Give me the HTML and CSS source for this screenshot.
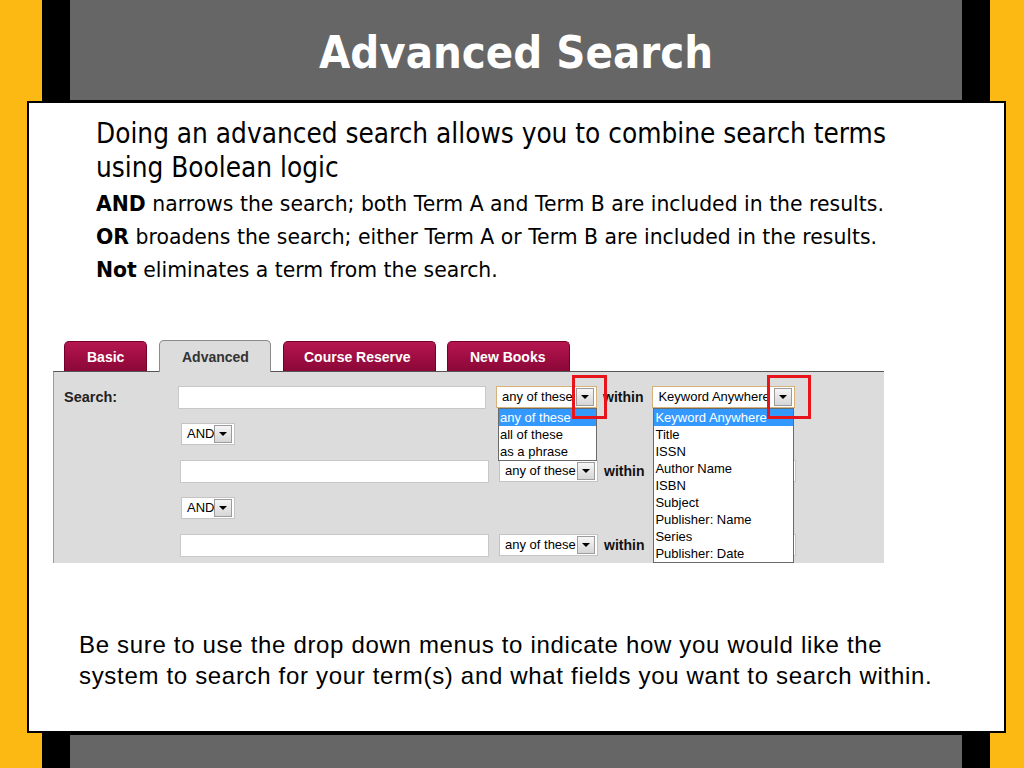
FILE: index.html
```html
<!DOCTYPE html>
<html lang="en">

<head>
    <meta charset="utf-8">
    <meta name="viewport" content="width=device-width, initial-scale=1.0">
    <title>Advanced Search</title>
    <link rel="stylesheet" href="styles.css">
</head>

<body>
    <div class="slide">
        <header class="title-bar">
            <h1>Advanced Search</h1>
        </header>

        <section class="card">
            <div class="intro">
                <p class="lead">Doing an advanced search allows you to combine search terms using Boolean logic</p>
                <p class="op"><b>AND</b> narrows the search; both Term A and Term B are included in the results.</p>
                <p class="op"><b>OR</b> broadens the search; either Term A or Term B are included in the results.</p>
                <p class="op"><b>Not</b> eliminates a term from the search.</p>
            </div>

            <!-- screenshot of the catalogue search form -->
            <div class="shot">
                <div class="tabs">
                    <span class="tab">Basic</span>
                    <span class="tab active">Advanced</span>
                    <span class="tab wide">Course Reserve</span>
                    <span class="tab books">New Books</span>
                </div>
                <div class="panel">
                    <div class="row">
                        <span class="label">Search:</span>
                        <span class="input first"></span>
                        <span class="select mode focus">any of these<i class="arrow"></i>
                            <ul class="list">
                                <li class="hl">any of these</li>
                                <li>all of these</li>
                                <li>as a phrase</li>
                            </ul>
                            <span class="mark"></span>
                        </span>
                        <span class="within">within</span>
                        <span class="select field focus">Keyword Anywhere<i class="arrow"></i>
                            <ul class="list">
                                <li class="hl">Keyword Anywhere</li>
                                <li>Title</li>
                                <li>ISSN</li>
                                <li>Author Name</li>
                                <li>ISBN</li>
                                <li>Subject</li>
                                <li>Publisher: Name</li>
                                <li>Series</li>
                                <li>Publisher: Date</li>
                            </ul>
                            <span class="mark"></span>
                        </span>
                    </div>
                    <div class="row">
                        <span class="label"></span>
                        <span class="select bool">AND<i class="arrow"></i></span>
                    </div>
                    <div class="row">
                        <span class="label"></span>
                        <span class="input"></span>
                        <span class="select mode">any of these<i class="arrow"></i></span>
                        <span class="within">within</span>
                        <span class="select field"></span>
                    </div>
                    <div class="row">
                        <span class="label"></span>
                        <span class="select bool">AND<i class="arrow"></i></span>
                    </div>
                    <div class="row">
                        <span class="label"></span>
                        <span class="input"></span>
                        <span class="select mode">any of these<i class="arrow"></i></span>
                        <span class="within">within</span>
                        <span class="select field"></span>
                    </div>
                </div>
            </div>

            <p class="note">Be sure to use the drop down menus to indicate how you would like the system to search for your term(s) and what fields you want to search within.</p>
        </section>

        <footer class="foot-bar"></footer>
    </div>
</body>

</html>
```

FILE: styles.css
```css
* {
    padding: 0;
    margin: 0;
    box-sizing: border-box;
}

body {
    background-color: #fdb913;
    height: 768px;
    overflow: hidden;
}

.slide {
    margin-left: 42px;
    width: 948px;
    height: 768px;
    background-color: #000;
    display: flex;
    flex-direction: column;
}

.title-bar {
    margin: 0 28px;
    height: 100px;
    background-color: #666;
    display: flex;
    align-items: center;
    justify-content: center;
}

.title-bar h1 {
    color: #fff;
    font-family: "DejaVu Sans Condensed", "DejaVu Sans", sans-serif;
    font-weight: bold;
    font-size: 45px;
    padding-top: 4px;
}

.card {
    margin: 1px -16px 0 -15px;
    height: 632px;
    background-color: #fff;
    border: 2px solid #000;
    padding: 14px 0 0 0;
}

.intro {
    padding-left: 67px;
    color: #000;
}

.lead {
    font-family: "DejaVu Sans Condensed", "DejaVu Sans", sans-serif;
    font-size: 27.7px;
    line-height: 34px;
    width: 840px;
}

.op {
    font-family: "DejaVu Sans", sans-serif;
    font-size: 20.4px;
    line-height: 33px;
}

.lead + .op {
    margin-top: 3px;
}

.note {
    margin-top: 66px;
    padding-left: 50px;
    font-family: "Liberation Sans", Arial, sans-serif;
    font-size: 24px;
    letter-spacing: 0.68px;
    line-height: 31px;
    width: 920px;
    color: #000;
}

/* form screenshot */

.shot {
    margin: 53px 0 0 24px;
    width: 831px;
    font-family: "Liberation Sans", Arial, sans-serif;
    font-size: 13px;
}

.tabs {
    display: flex;
    align-items: flex-end;
    gap: 12px;
    padding-left: 11px;
    height: 31px;
}

.tab {
    width: 83px;
    height: 30px;
    padding: 7px 0 0 22px;
    color: #fff;
    font-size: 14px;
    font-weight: bold;
    border: 1px solid #74002a;
    border-bottom: none;
    border-radius: 5px 5px 0 0;
    background: linear-gradient(#b5164f, #9c0c40 60%, #8a0837);
}

.tab.active {
    width: 112px;
    height: 32px;
    margin-bottom: -1px;
    padding-top: 8px;
    color: #333;
    background: #dcdcdc;
    border-color: #8a8a8a;
    position: relative;
    z-index: 1;
}

.tab.wide {
    width: 153px;
    padding-left: 20px;
}

.tab.books {
    width: 123px;
    margin-left: -1px;
}

.panel {
    height: 192px;
    background-color: #dcdcdc;
    border-top: 1px solid #555;
    border-left: 1px solid #9a9a9a;
    padding-top: 14px;
    overflow: hidden;
    display: flex;
    flex-direction: column;
    gap: 15px;
    color: #000;
}

.row {
    display: flex;
    align-items: center;
    height: 22px;
}

.label {
    width: 124px;
    padding-left: 10px;
    font-size: 14.5px;
    font-weight: bold;
    color: #222;
}

.input {
    width: 309px;
    height: 23px;
    background-color: #fff;
    border: 1px solid #c8c8c8;
    margin-left: 2px;
}

.input.first {
    margin-left: 0;
    width: 308px;
}

.select {
    position: relative;
    height: 22px;
    line-height: 20px;
    padding-left: 5px;
    background-color: #fff;
    border: 1px solid #c4c4c4;
    white-space: nowrap;
}

.select.focus {
    border-color: #d4b27a;
}

.select.mode {
    width: 99px;
    margin-left: 10px;
}

.select.mode.focus {
    width: 101px;
    margin-left: 10px;
}

.select.field {
    width: 143px;
    margin-left: 9px;
}

.select.bool {
    width: 54px;
    margin-left: 3px;
}

.arrow {
    position: absolute;
    right: 2px;
    top: 1px;
    width: 18px;
    height: 18px;
    background: linear-gradient(#f6f6f6, #d6d6d6);
    border: 1px solid #9c9c9c;
}

.arrow::after {
    content: "";
    position: absolute;
    left: 4px;
    top: 6px;
    border-left: 4px solid transparent;
    border-right: 4px solid transparent;
    border-top: 4px solid #000;
}

.within {
    margin-left: 6px;
    font-size: 14px;
    font-weight: bold;
    color: #111;
}

.list {
    position: absolute;
    top: 21px;
    left: 0;
    width: 100%;
    list-style: none;
    background-color: #fff;
    border: 1px solid #6a6a6a;
    z-index: 2;
}

.mode .list {
    left: 1px;
    width: 99px;
}

.list li {
    height: 17px;
    line-height: 17px;
    padding-left: 1px;
    color: #000;
}

.list li.hl {
    background-color: #3399ff;
    color: #fff;
}

.mark {
    position: absolute;
    top: -12px;
    height: 44px;
    border: 3px solid #e8141b;
    z-index: 3;
}

.mode .mark {
    left: 75px;
    width: 35px;
}

.field .mark {
    left: 114px;
    width: 44px;
}

.foot-bar {
    margin: 2px 28px 0;
    flex: 1;
    background-color: #666;
}
```
